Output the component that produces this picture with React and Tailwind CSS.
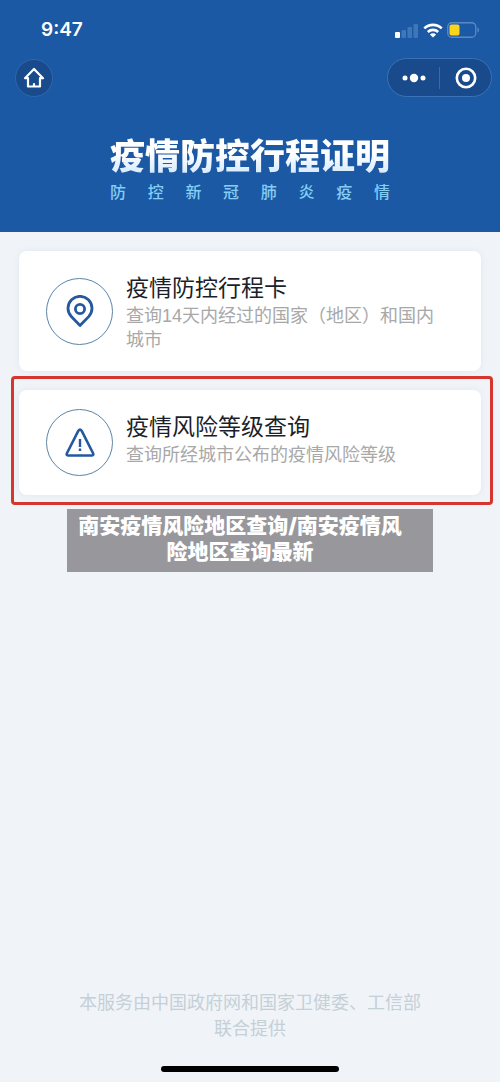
import React from "react";

const subtitle = ["防", "控", "新", "冠", "肺", "炎", "疫", "情"];

const SignalIcon = () => (
  <svg width="24" height="15" viewBox="0 0 24 15" aria-hidden="true">
    <rect x="0" y="9" width="5" height="6" rx="1" fill="#fff" />
    <rect x="6.5" y="7" width="4.5" height="8" rx="1" fill="#3f76b8" />
    <rect x="12.5" y="4" width="4.5" height="11" rx="1" fill="#3f76b8" />
    <rect x="18.5" y="1" width="4.5" height="14" rx="1" fill="#3f76b8" />
  </svg>
);

const WifiIcon = () => (
  <svg width="20" height="15" viewBox="0 0 20 15" aria-hidden="true">
    <g fill="none" stroke="#fff" strokeWidth="2.6">
      <path d="M1.3 5.4a12.4 12.4 0 0 1 17.4 0" />
      <path d="M4.8 9a7.5 7.5 0 0 1 10.4 0" />
    </g>
    <path d="M10 14.6 6.9 11.5a4.4 4.4 0 0 1 6.2 0z" fill="#fff" />
  </svg>
);

const BatteryIcon = () => (
  <svg width="33" height="16" viewBox="0 0 33 16" aria-hidden="true">
    <rect x="0.75" y="0.75" width="28" height="14.5" rx="4" fill="none" stroke="#5a8ac6" strokeWidth="1.3" />
    <rect x="2.5" y="2.5" width="10" height="11" rx="2" fill="#fbd51c" />
    <path d="M30.5 5.5c2 .6 2 4.4 0 5z" fill="#5a8ac6" />
  </svg>
);

const HomeIcon = () => (
  <svg width="22" height="22" viewBox="0 0 22 22" aria-hidden="true">
    <g fill="none" stroke="#fff" strokeWidth="2.2" strokeLinejoin="round" strokeLinecap="round">
      <path d="M5 11.200H2L11 2l9 9.200h-3V19.500H5z" />
      <path d="M11 17v2" />
    </g>
  </svg>
);

const PinIcon = () => (
  <svg width="28" height="33" viewBox="0 0 28 33" aria-hidden="true">
    <g fill="none" stroke="#24599f" strokeWidth="2.8" strokeLinejoin="round">
      <path d="M14 30.5 5.3 21.600a12 12 0 1 1 17.400 0z" />
      <circle cx="14" cy="14" r="4.6" />
    </g>
  </svg>
);

const WarningIcon = () => (
  <svg width="30" height="30" viewBox="0 0 30 30" aria-hidden="true">
    <g fill="none" stroke="#24599f">
      <path
        d="M13.4 2.700Q15 .6 16.600 2.700L28.200 25.500Q28.800 27.400 27 27.500H3Q1.200 27.400 1.800 25.500z"
        strokeWidth="2.6"
        strokeLinejoin="round"
      />
      <path d="M15 11v8M15 20.500v2.600" strokeWidth="2.4" />
    </g>
  </svg>
);

const ServiceCard = ({ icon, title, text }) => (
  <a
    href="#"
    className="flex items-center gap-[13px] rounded-lg bg-white py-[19px] pl-[27px] pr-10 shadow-[0_0_6px_rgba(120,150,170,0.12)]"
  >
    <span className="flex size-[67px] shrink-0 items-center justify-center rounded-full border border-[#5c84a8]">
      {icon}
    </span>
    <span className="self-start pt-0.5">
      <span className="block text-[23px] leading-8 text-[#1b1f2b]">{title}</span>
      <span className="block text-lg leading-6 text-[#a8a8a8]">{text}</span>
    </span>
  </a>
);

const App = () => {
  return (
    <div
      lang="zh-CN"
      className="flex min-h-screen flex-col bg-[#f0f4f9] font-['Liberation_Sans','Noto_Sans_CJK_SC',sans-serif]"
    >
      <header className="bg-[#1c59a4] pb-[27px]">
        <div className="flex h-[58px] items-start justify-between pt-5 pl-[41px] pr-5">
          <span className="font-[Inter,sans-serif] text-[19px] leading-5 font-semibold text-white">9:47</span>
          <div className="flex h-5 items-center gap-1">
            <SignalIcon />
            <WifiIcon />
            <BatteryIcon />
          </div>
        </div>

        <nav className="flex items-center justify-between pl-[15px] pr-2">
          <button
            aria-label="首页"
            className="flex size-[38px] items-center justify-center rounded-full border border-[#2d67ac] bg-[#194b8c]"
          >
            <HomeIcon />
          </button>
          <div className="flex h-[39px] w-[105px] items-center rounded-full border border-[#3a72b5] bg-[#194b8c]">
            <button aria-label="更多" className="flex h-full flex-1 items-center justify-center">
              <svg width="24" height="10" viewBox="0 0 24 10" fill="#fff" aria-hidden="true">
                <circle cx="3" cy="5" r="2.5" />
                <circle cx="12" cy="5" r="4.2" />
                <circle cx="21" cy="5" r="2.5" />
              </svg>
            </button>
            <span className="h-[22px] w-px bg-[#3a6ba8]" />
            <button aria-label="关闭" className="flex h-full flex-1 items-center justify-center">
              <svg width="22" height="22" viewBox="0 0 22 22" aria-hidden="true">
                <circle cx="11" cy="11" r="9.2" fill="none" stroke="#fff" strokeWidth="2.6" />
                <circle cx="11" cy="11" r="4" fill="#fff" />
              </svg>
            </button>
          </div>
        </nav>

        <div className="mx-auto mt-10 w-fit">
          <h1 className="bg-gradient-to-b from-white from-40% to-[#cfe6ff] bg-clip-text text-[35px] leading-10 font-black text-transparent">
            疫情防控行程证明
          </h1>
          <p className="mt-1 flex justify-between text-base leading-6 font-medium text-[#84cdf5]">
            {subtitle.map((char) => (
              <span key={char}>{char}</span>
            ))}
          </p>
        </div>
      </header>

      <main className="flex flex-col gap-[19px] px-[19px] pt-[19px]">
        <ServiceCard
          icon={<PinIcon />}
          title="疫情防控行程卡"
          text="查询14天内经过的国家（地区）和国内城市"
        />
        <div className="relative">
          <ServiceCard
            icon={<WarningIcon />}
            title="疫情风险等级查询"
            text="查询所经城市公布的疫情风险等级"
          />
          <div className="pointer-events-none absolute -top-3.5 -right-3 -bottom-2.5 -left-2 rounded-sm border-3 border-[#d5372f]" />
        </div>
      </main>

      <p className="mx-[67px] mt-3.5 bg-[#98989c] pt-1 pr-[26px] pb-[7px] pl-1.5 text-center font-[Inter,'Noto_Sans_CJK_SC',sans-serif] text-[21px] leading-[26px] font-black text-white">
        南安疫情风险地区查询/南安疫情风险地区查询最新
      </p>

      <footer className="mt-auto px-[72px] pb-2.5">
        <p className="text-center text-lg leading-[26px] text-[#c5d0d6]">
          本服务由中国政府网和国家卫健委、工信部联合提供
        </p>
        <div className="mx-auto mt-6 h-1.5 w-[178px] rounded-full bg-black" />
      </footer>
    </div>
  );
};

export default App;
